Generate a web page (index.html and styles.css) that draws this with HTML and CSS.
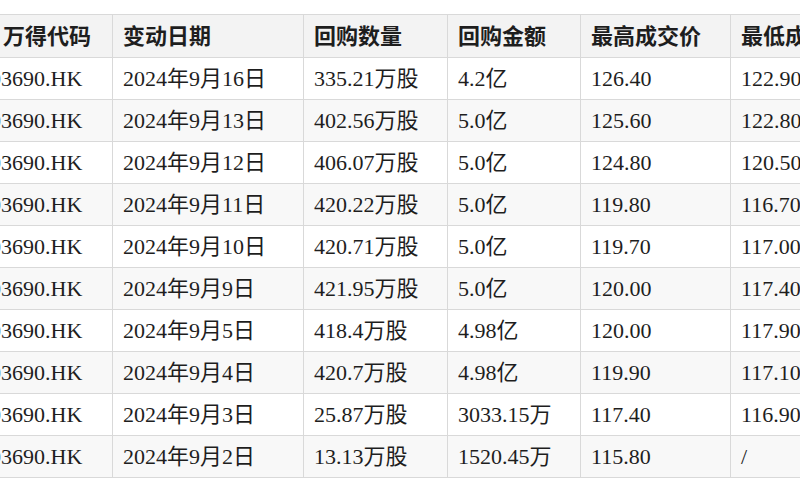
FILE: index.html
```html
<!DOCTYPE html>
<html lang="zh">
<head>
<meta charset="utf-8">
<link rel="stylesheet" href="styles.css">
</head>
<body>
<table class="buyback">
  <colgroup>
    <col class="c1"><col class="c2"><col class="c3"><col class="c4"><col class="c5"><col class="c6">
  </colgroup>
  <thead>
    <tr><th class="first">万得代码</th><th>变动日期</th><th>回购数量</th><th>回购金额</th><th>最高成交价</th><th>最低成交价</th></tr>
  </thead>
  <tbody>
    <tr><td>03690.HK</td><td>2024年9月16日</td><td>335.21万股</td><td>4.2亿</td><td>126.40</td><td>122.90</td></tr>
    <tr><td>03690.HK</td><td>2024年9月13日</td><td>402.56万股</td><td>5.0亿</td><td>125.60</td><td>122.80</td></tr>
    <tr><td>03690.HK</td><td>2024年9月12日</td><td>406.07万股</td><td>5.0亿</td><td>124.80</td><td>120.50</td></tr>
    <tr><td>03690.HK</td><td>2024年9月11日</td><td>420.22万股</td><td>5.0亿</td><td>119.80</td><td>116.70</td></tr>
    <tr><td>03690.HK</td><td>2024年9月10日</td><td>420.71万股</td><td>5.0亿</td><td>119.70</td><td>117.00</td></tr>
    <tr><td>03690.HK</td><td>2024年9月9日</td><td>421.95万股</td><td>5.0亿</td><td>120.00</td><td>117.40</td></tr>
    <tr><td>03690.HK</td><td>2024年9月5日</td><td>418.4万股</td><td>4.98亿</td><td>120.00</td><td>117.90</td></tr>
    <tr><td>03690.HK</td><td>2024年9月4日</td><td>420.7万股</td><td>4.98亿</td><td>119.90</td><td>117.10</td></tr>
    <tr><td>03690.HK</td><td>2024年9月3日</td><td>25.87万股</td><td>3033.15万</td><td>117.40</td><td>116.90</td></tr>
    <tr><td>03690.HK</td><td>2024年9月2日</td><td>13.13万股</td><td>1520.45万</td><td>115.80</td><td>/</td></tr>
  </tbody>
</table>
</body>
</html>
```
FILE: styles.css
```css
html, body {
  margin: 0;
  padding: 0;
  background: #ffffff;
  overflow: hidden;
  width: 800px;
  height: 500px;
}
.buyback {
  border-collapse: collapse;
  table-layout: fixed;
  width: 900px;
  margin: 14px 0 0 -21px;
  font-family: "Liberation Serif", "Noto Sans CJK SC", serif;
  font-size: 22px;
  color: #1e1e1e;
}
.c1 { width: 133px; }
.c2 { width: 191px; }
.c3 { width: 144px; }
.c4 { width: 133px; }
.c5 { width: 150px; }
.c6 { width: 149px; }
.buyback th, .buyback td {
  border: 1px solid #d9d9d9;
  padding: 0 0 0 10px;
  text-align: left;
  white-space: nowrap;
  overflow: hidden;
  height: 41px;
  line-height: 41px;
}
.buyback th {
  background: #f3f3f3;
  font-weight: bold;
  height: 42px;
}
.buyback th.first {
  padding-left: 23px;
}
.buyback tbody tr:nth-child(even) td {
  background: #f8f8f8;
}
```
